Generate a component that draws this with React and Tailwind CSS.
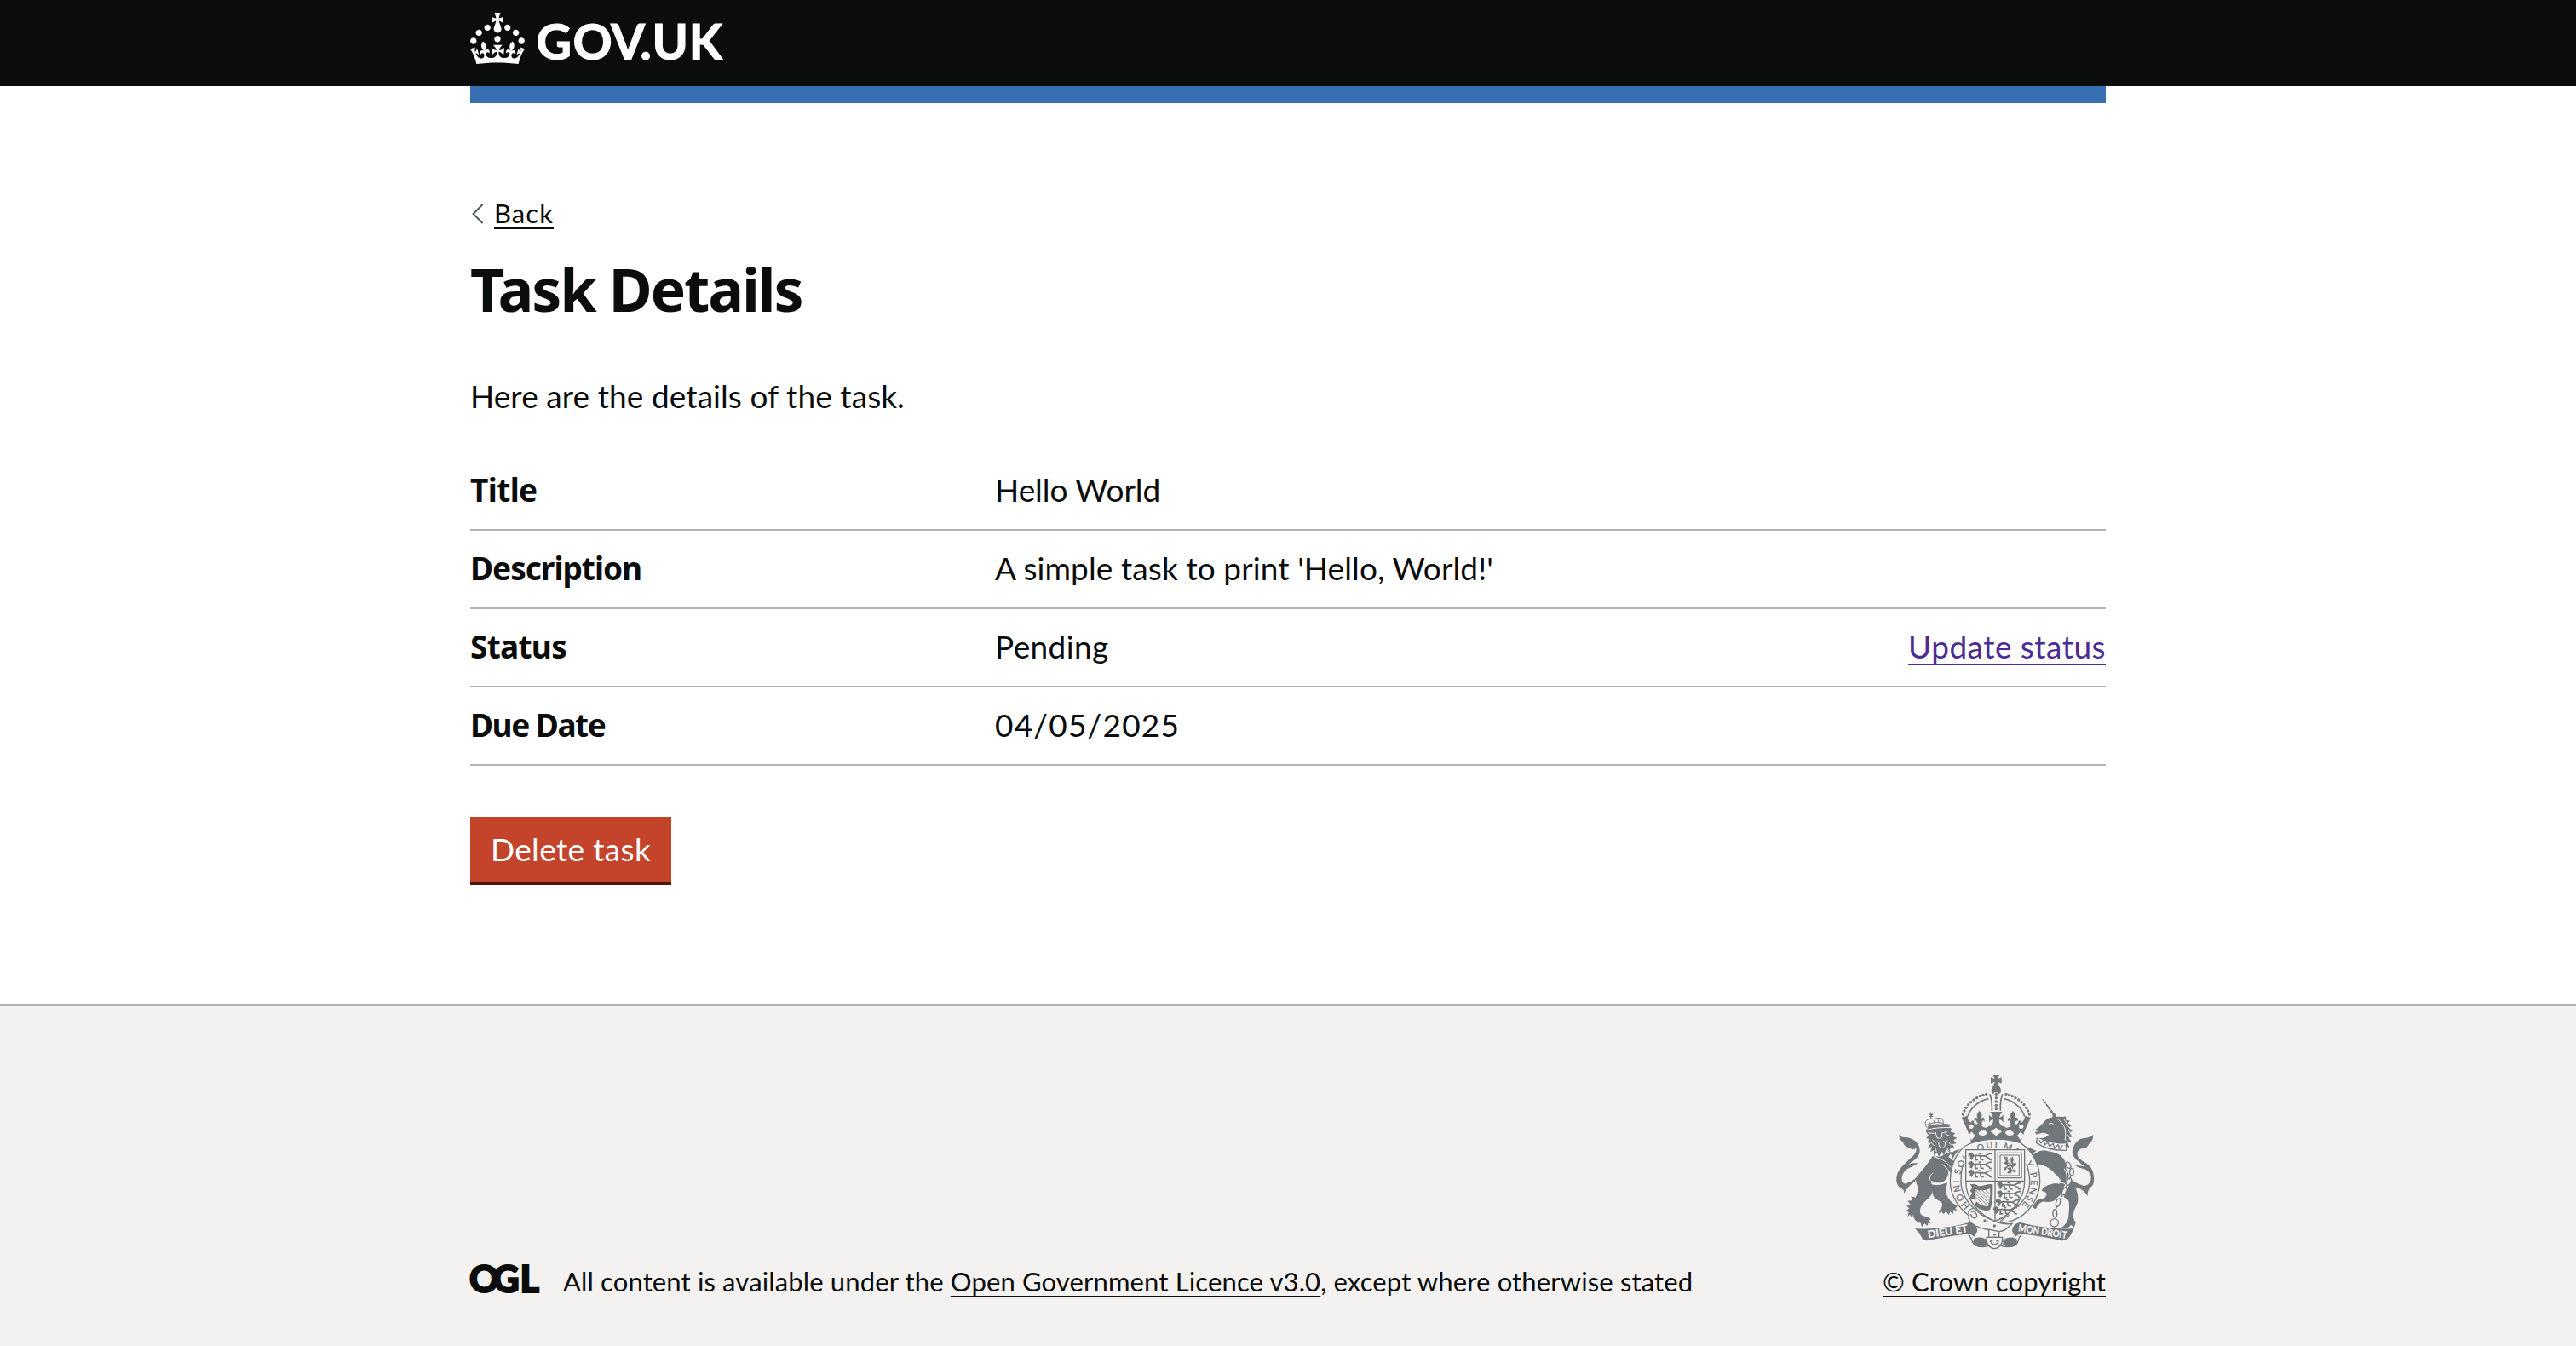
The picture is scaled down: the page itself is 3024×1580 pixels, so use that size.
const rows = [
  { key: "Title", keyClass: "tracking-[-0.6px]", value: "Hello World", valueClass: "tracking-[-0.05px]" },
  { key: "Description", keyClass: "tracking-[-1px]", value: "A simple task to print 'Hello, World!'", valueClass: "tracking-[0.1px]" },
  { key: "Status", keyClass: "tracking-[-0.7px]", value: "Pending", valueClass: "tracking-[0.4px]", action: "Update status" },
  { key: "Due Date", keyClass: "tracking-[-1.5px]", value: "04/05/2025", valueClass: "tracking-[1.2px]" },
];

function GovLogo() {
  return (
    <svg viewBox="0 0 148 30" className="block h-[60px] w-[296px] overflow-visible fill-white" role="img" aria-label="GOV.UK">
      <path d="M22.6 10.4c-1 .4-2-.1-2.4-1-.4-.9.1-2 1-2.4.9-.4 2 .1 2.4 1s-.1 2-1 2.4m-5.9 6.7c-.9.4-2-.1-2.4-1-.4-.9.1-2 1-2.4.9-.4 2 .1 2.4 1s-.1 2-1 2.4m10.8-3.7c-1 .4-2-.1-2.4-1-.4-.9.1-2 1-2.4.9-.4 2 .1 2.4 1s0 2-1 2.4m3.3 4.8c-1 .4-2-.1-2.4-1-.4-.9.1-2 1-2.4.9-.4 2 .1 2.4 1s-.1 2-1 2.4M17 4.7l2.3 1.2V2.5l-2.3.7-.2-.2.9-3h-3.4l.9 3-.2.2c-.1.1-2.3-.7-2.3-.7v3.4L15 4.7c.1.1.1.2.2.2l-1.3 4c-.1.2-.1.4-.1.6 0 1.1.8 2 1.9 2.2h.7c1-.2 1.9-1.1 1.9-2.1 0-.2 0-.4-.1-.6l-1.3-4c-.1-.2 0-.2.1-.3m-7.6 5.7c.9.4 2-.1 2.4-1 .4-.9-.1-2-1-2.4-.9-.4-2 .1-2.4 1s0 2 1 2.4m-5 3c.9.4 2-.1 2.4-1 .4-.9-.1-2-1-2.4-.9-.4-2 .1-2.4 1s.1 2 1 2.4m-3.2 4.8c.9.4 2-.1 2.4-1 .4-.9-.1-2-1-2.4-.9-.4-2 .1-2.4 1s0 2 1 2.4m14.8 11c4.4 0 8.6.3 12.3.8 1.1-4.5 2.4-7 3.7-8.8l-2.5-.9c.2 1.3.3 1.9 0 2.7-.4-.4-.8-1.1-1.1-2.3l-1.2 4c.7-.5 1.3-.8 2-.9-1.1 2.5-2.6 3.1-3.5 3-1.1-.2-1.7-1.2-1.5-2.1.3-1.2 1.5-1.5 2.1-.1 1.1-2.3-.8-3-2-2.3 1.9-1.9 2.1-3.5.6-5.6-2.1 1.6-2.1 3.2-1.2 5.5-1.2-1.4-3.2-.6-2.5 1.6.9-1.4 2.1-.5 1.9.8-.2 1.1-1.7 2.1-3.5 1.9-2.7-.2-2.9-2.1-2.9-3.6.7-.1 1.9.5 2.9 1.9l.4-4.3c-1.1 1.1-2.1 1.4-3.2 1.4.4-1.2 2.1-3 2.1-3h-5.4s1.7 1.9 2.1 3c-1.1 0-2.1-.2-3.2-1.4l.4 4.3c1-1.4 2.2-2 2.9-1.9-.1 1.5-.2 3.4-2.9 3.6-1.9.2-3.4-.8-3.5-1.9-.2-1.3 1-2.2 1.9-.8.7-2.3-1.2-3-2.5-1.6.9-2.2.9-3.9-1.2-5.5-1.5 2-1.3 3.7.6 5.6-1.2-.7-3.1 0-2 2.3.6-1.4 1.8-1.1 2.1.1.2.9-.3 1.9-1.5 2.1-.9.2-2.4-.5-3.5-3 .6 0 1.2.3 2 .9l-1.2-4c-.3 1.1-.7 1.9-1.1 2.3-.3-.8-.2-1.4 0-2.7l-2.9.9C1.3 23 2.6 25.5 3.7 30c3.7-.5 7.9-.8 12.3-.8" />
      <text x="38.7 60.3 82.6 99.6 106.8 128.4" y="27.6" className="font-['Lato'] text-[28.6px] font-bold stroke-white [stroke-width:0.6px]">GOV.UK</text>
    </svg>
  );
}

function OglLogo() {
  return (
    <svg viewBox="0 0 82 34" className="block h-[34px] w-[82px] shrink-0 overflow-visible fill-[#0b0c0c] stroke-[#0b0c0c]" role="img" aria-label="OGL">
      <text x="-1 26.6 58.5" y="32.6" className="font-['Lato'] text-[43px] font-black [stroke-width:2px]">OGL</text>
    </svg>
  );
}

const beads = [[395, 130], [384, 133], [373, 137], [362, 143], [351, 150], [341, 158], [332, 167], [324, 178], [318, 189], [313, 201]];
const walkers = [[374, 352], [374, 382], [374, 412], [476, 455], [476, 485], [470, 515], [462, 542]];

function Fleur({ x, y }) {
  return <path transform={`translate(${x} ${y})`} d="M0-22C10-12 11-4 5 8C10-3 22 2 17 15C14 9 9 11 9 20H-9C-9 11-14 9-17 15C-22 2-10-3-5 8C-11-4-10-12 0-22Z" />;
}

function Crest() {
  return (
    <svg viewBox="75 60 702 618" className="block h-[206px] w-[234px] fill-[#71777a] stroke-[#71777a] [stroke-width:0]" role="img" aria-label="Royal coat of arms">
      {/* crown */}
      <path d="M419 63H441L435 76L449 70V92L435 86L439 99H421L425 86L411 92V70L425 76Z" />
      <path d="M430 97C444 99 449 112 446 124L440 130L436 124H424L420 130L414 124C411 112 416 99 430 97Z" />
      {beads.map(([x, y]) => (
        <g key={x}>
          <circle cx={x} cy={y} r="5" />
          <circle cx={860 - x} cy={y} r="5" />
        </g>
      ))}
      <g className="fill-none [stroke-width:5]">
        <path d="M403 146C368 153 340 178 330 208M457 146C492 153 520 178 530 208" />
        <path d="M408 130C414 148 416 168 415 188M452 130C446 148 444 168 445 188" />
      </g>
      <circle cx="430" cy="130" r="5" />
      <circle cx="430" cy="143" r="5" />
      <circle cx="430" cy="156" r="5" />
      <circle cx="430" cy="169" r="5" />
      <circle cx="430" cy="182" r="5" />
      <path d="M409 192H451C445 200 443 206 441 212C448 211 452 208 455 202V230C451 223 447 220 440 220L443 240H417L420 220C413 220 409 223 405 230V202C408 208 412 211 419 212C417 206 415 200 409 192Z" />
      <Fleur x={371} y={211} />
      <Fleur x={489} y={211} />
      <path d="M308 212L330 206C328 217 334 224 341 230C345 218 352 222 352 230C358 240 366 236 370 224H374C378 236 388 244 398 236C404 244 412 246 418 232H442C448 246 456 244 462 236C472 244 482 236 486 224H490C494 236 502 240 508 230C508 222 515 218 519 230C526 224 532 217 530 206L552 212C541 234 528 262 516 302C462 288 398 288 344 302C332 262 319 234 308 212Z" />
      <g className="fill-[#f3f2f1]">
        <path d="M343 262L356 276L345 291L330 280ZM517 262L504 276L515 291L530 280ZM430 248L450 262L430 277L410 262Z" />
        <ellipse cx="383" cy="267" rx="15" ry="9" transform="rotate(-8 383 267)" />
        <ellipse cx="477" cy="267" rx="15" ry="9" transform="rotate(8 477 267)" />
        <circle cx="342" cy="244" r="8" />
        <circle cx="518" cy="244" r="8" />
        <path d="M378 240C384 248 396 252 404 242L398 232C392 240 384 240 378 240ZM482 240C476 248 464 252 456 242L462 232C468 240 476 240 482 240Z" />
      </g>

      {/* lion */}
      <path d="M88 272C96 285 108 280 124 284C146 290 162 308 161 330C160 356 134 366 118 380C134 370 146 374 156 372C140 384 130 386 116 394C104 402 96 420 98 432C100 446 112 450 120 440C132 440 140 430 150 424L144 438C130 448 118 456 106 480C106 470 104 466 96 462C82 456 76 440 80 418C86 392 108 376 126 358C142 344 152 332 148 318C140 330 130 322 120 318C108 314 102 306 102 298C94 294 88 286 88 272Z" />
      <path d="M206 348C226 352 240 350 254 338L276 332L262 350L280 366C276 374 280 384 296 388C310 386 318 392 324 390L338 398L334 404L342 410L334 414L338 424L324 420L318 430L312 418C300 420 284 414 272 408L262 398C262 416 258 428 244 438C230 446 212 440 200 434L206 462C208 480 198 492 186 502C172 514 160 530 162 546C164 558 178 560 190 564L200 570L194 576L200 586L190 584L188 594L178 586L168 598L164 584L150 578C140 570 136 560 140 548L134 566L126 554L118 562L122 546L114 540L124 532L114 524L128 518L118 506L134 504L130 490L146 494C152 482 156 466 152 452C148 440 146 430 148 424C164 404 190 376 206 348Z" />
      <path d="M200 446C222 456 244 446 258 442C256 458 248 470 256 486C262 498 270 510 284 518L294 524L286 532L292 540L278 538L280 552L268 544L264 556L254 544L244 552L238 544L228 550L232 536C240 528 244 520 236 510C222 502 206 494 206 476Z" />
      <path d="M270 340C282 328 292 326 304 324C290 334 282 346 278 358Z" />
      <path d="M182 262L192 242L206 236L222 240L244 234L268 236L264 246L276 254L268 262L286 268L276 278L292 284L280 292L290 304L276 306L284 322L268 318L266 336L254 324L246 346L238 332L228 350L222 336L210 346L210 328L198 334L204 316L190 318L200 302L186 300L196 288L184 286L192 274Z" />
      <g className="fill-none stroke-[#f3f2f1] [stroke-width:3]">
        <path d="M190 266L212 268M238 268L258 262M216 264L222 284L230 286L240 280L236 262M206 290C212 300 218 304 222 296M244 294C248 304 254 300 258 292M228 298C226 312 234 324 244 318C254 312 250 300 248 296M196 296L212 312M262 298L272 310M256 318L262 330M214 318L220 334M250 270L268 278M186 256C206 250 240 246 266 248" />
        <path d="M210 350C226 356 244 358 262 378C270 388 276 396 292 400M198 434C194 424 198 412 208 408M306 398L326 402M304 408L324 412M262 398L240 376" />
      </g>
      <g className="fill-none [stroke-width:3]">
        <path d="M186 248C176 232 180 220 196 218C204 216 218 218 226 214C242 216 248 226 242 240M188 246C204 238 224 234 242 240M186 238C204 230 222 228 242 232M194 228L198 236M210 222L214 234M226 220L228 232M200 194V216M192 202H208" />
      </g>
      <path d="M194 198L200 202L206 196L204 206L210 210H192L198 206Z" />

      {/* unicorn */}
      <path d="M590 145L597 150L638 202L630 206Z" />
      <path className="fill-none stroke-[#f3f2f1] [stroke-width:3]" d="M592 158L604 150M599 169L611 161M607 180L619 172M615 191L627 183M623 201L634 193" />
      <path d="M600 226C608 216 618 212 626 212L636 196L642 210C656 208 668 212 676 208L674 220L690 224L682 232L696 240L686 248L698 260L688 266L698 280L686 284L696 300L682 300L688 318L674 312L676 304C644 306 604 298 578 284C592 288 608 282 616 272C604 268 596 264 586 268L572 272L566 264L578 262L566 256C576 250 590 240 600 226Z" />
      <g className="fill-none stroke-[#f3f2f1] [stroke-width:3]">
        <path d="M616 234C622 230 630 232 632 238C626 240 620 238 616 234M646 218C668 232 680 256 672 292M668 218L682 236M674 234L690 250M680 254L694 268M680 272L692 288M676 290L688 304" />
      </g>
      <path className="fill-none [stroke-width:4]" d="M574 284L572 302C600 320 636 330 678 328L676 306M582 292L588 302L596 294L602 308L612 300L618 314L630 304L636 320L648 308L654 322L664 310" />
      <path d="M540 362C546 346 570 338 584 330L600 328C616 332 640 334 656 346C672 360 678 376 676 392C684 406 694 428 704 446C714 470 720 484 718 506C714 526 700 540 700 560L710 584L704 600L694 590L680 604L660 600C674 590 680 580 684 566C686 544 690 520 684 504C676 498 668 494 662 484C652 492 646 490 640 502C630 510 610 512 596 508C584 512 576 520 570 534L558 530C562 516 572 508 576 502L594 500C606 492 612 482 604 476L590 470C598 452 624 446 640 444C652 448 658 440 656 430C646 420 630 400 614 390C598 378 578 376 560 374L548 386C546 402 540 412 548 424C556 428 560 436 558 444L540 438C530 424 528 408 532 392C530 378 534 370 540 362Z" />
      <path d="M536 316C548 318 560 326 572 330C560 338 548 342 534 346Z" />
      <path d="M772 272C772 290 764 302 756 306C754 316 742 322 730 322C720 326 712 336 718 350C726 364 748 370 762 386C776 404 778 440 768 454C756 462 752 472 752 490C744 474 732 466 722 462C706 460 696 446 690 428C704 440 722 446 736 452C748 456 762 444 764 428C766 412 756 402 746 396C732 390 722 392 708 382C722 382 732 382 742 388C732 372 704 362 698 338C698 318 708 298 726 288C744 282 758 286 772 272Z" />
      <path className="fill-none stroke-[#f3f2f1] [stroke-width:3]" d="M668 480C664 468 676 456 678 436C680 420 678 404 670 392M648 446C656 440 664 442 672 446" />
      {/* chain */}
      <g className="fill-none stroke-[#f3f2f1] [stroke-width:14]">
        <path d="M684 376L696 400L690 430L674 462L658 494L646 520L636 566" />
      </g>
      <g className="fill-none [stroke-width:4]">
        <ellipse cx="684" cy="380" rx="7" ry="12" transform="rotate(-30 684 380)" />
        <ellipse cx="696" cy="404" rx="7" ry="12" />
        <ellipse cx="686" cy="438" rx="7" ry="13" transform="rotate(24 686 438)" />
        <ellipse cx="670" cy="472" rx="7" ry="13" transform="rotate(24 670 472)" />
        <ellipse cx="648" cy="512" rx="7" ry="14" transform="rotate(16 648 512)" />
        <ellipse cx="637" cy="550" rx="7" ry="14" />
        <circle cx="635" cy="583" r="14" />
        <path d="M693 418L689 428M679 450L674 461M664 484L656 500M644 526L639 538" />
      </g>

      {/* garter */}
      <path className="fill-[#f3f2f1] [stroke-width:4]" d="M344 302C300 316 268 368 268 438C268 486 300 540 350 568C390 592 462 592 508 566C554 540 584 486 584 438C584 380 560 332 516 302C462 284 398 284 344 302Z" />
      <path className="fill-none [stroke-width:4]" d="M314 376C308 392 306 416 306 438C306 474 326 510 352 532M536 376C544 396 548 418 548 438C548 474 530 506 500 528C484 540 462 548 446 552" />
      <defs>
        <path id="garter" d="M338 524A124 119 0 0 1 428 320A124 119 0 0 1 506 532" />
      </defs>
      <text className="font-['Lato'] text-[32px] [stroke-width:0.8px]">
        <textPath href="#garter" textLength="570">HONI SOIT QUI MAL Y PENSE</textPath>
      </text>

      {/* shield */}
      <path className="fill-[#f3f2f1] [stroke-width:4]" d="M323 326H530V436C530 496 490 552 426 578C362 552 323 496 323 436Z" />
      <path className="fill-none [stroke-width:4]" d="M426 326V578M323 436H530M436 337H519V425H436Z" />
      <path className="fill-none [stroke-width:3]" d="M444 345H511V417H444Z" />
      {walkers.map(([x, y]) => (
        <g key={`${x}-${y}`} transform={`translate(${x} ${y})`}>
          <path d="M-42-12L-30-17L-22-8L-24 0L-30 10L-38 6L-34-2L-42-4Z" />
          <path className="fill-none [stroke-width:5]" d="M-26-4C-12-10 6-2 18-5C28-8 26-14 42-12M-16-2L-18 10L-8 9M0-3L2 8L12 10M18-4C24 4 34 0 34 9L42 10M-6-13L4-12" />
        </g>
      ))}
      <path d="M456 352L468 350L474 362L470 370L482 372L480 356L488 350L492 360L488 374L498 370L502 380L490 386L488 394L500 398L498 408L486 402L480 410L468 408L476 398L470 392L458 400L456 390L468 384L462 376L454 374L464 366Z" />
      <path className="fill-none stroke-[#f3f2f1] [stroke-width:3]" d="M464 356L478 366L486 380M466 392L480 384L492 404M476 374L462 386" />
      <path d="M338 448L354 446L366 452C382 458 398 444 418 448L418 462C418 490 418 514 408 538C388 544 364 534 352 520L362 508L354 500L340 500L338 488L346 480L338 470L346 460Z" />
      <path className="fill-[#f3f2f1]" d="M358 466C372 472 394 470 408 462C410 484 408 504 402 524C384 526 368 518 358 504Z" />
      <path className="fill-none [stroke-width:2.5]" d="M358 468L404 516M358 480L396 520M360 493L382 518M368 468L406 506M380 468L408 496M392 466L408 482" />

      {/* belt buckle */}
      <path className="fill-[#f3f2f1] [stroke-width:4]" d="M334 552C326 536 352 526 362 540C372 556 396 566 420 576C436 584 456 590 486 586C472 600 462 612 440 614C402 612 372 600 352 592C340 586 330 574 334 552Z" />
      <path className="fill-none [stroke-width:4]" d="M342 546C346 538 360 546 362 556C364 564 354 570 346 564L340 552M440 584C450 572 462 562 476 556" />
      <circle cx="390" cy="576" r="5" />
      <circle cx="424" cy="594" r="5" />
      <path className="fill-[#f3f2f1] [stroke-width:4]" d="M404 606V634H440V614Z" />
      <path className="fill-none [stroke-width:4]" d="M332 626C348 634 340 656 360 664C378 670 392 668 408 664M520 626C504 634 512 656 494 664C476 670 460 668 446 664" />
      <path d="M352 640C364 630 390 634 398 644V662C380 670 352 668 348 654ZM502 640C490 630 464 634 454 644V662C472 670 500 668 504 654Z" />
      <path className="fill-[#f3f2f1] [stroke-width:4]" d="M396 634H452C454 656 442 672 424 674C406 672 394 656 396 634Z" />
      <path className="fill-none [stroke-width:4]" d="M410 644C408 664 440 664 438 644M410 644L418 648M438 644L430 648" />
      <circle cx="424" cy="625" r="4" />

      {/* motto ribbons */}
      <path d="M144 604C210 606 270 600 334 582C350 582 362 594 364 612L352 632L338 622C296 626 246 634 184 646C168 642 166 630 160 620Z" />
      <path d="M704 604C640 606 576 598 516 582C498 584 488 594 486 612L498 632L512 622C556 626 604 634 660 646C684 644 690 632 696 618Z" />
      <text x="191" y="637" transform="rotate(-9 191 637)" textLength="142" lengthAdjust="spacingAndGlyphs" className="fill-[#f3f2f1] stroke-[#f3f2f1] font-['Lato'] text-[36px] font-bold [stroke-width:1px]">DIEU ET</text>
      <text x="507" y="613" transform="rotate(8.5 507 613)" textLength="172" lengthAdjust="spacingAndGlyphs" className="fill-[#f3f2f1] stroke-[#f3f2f1] font-['Lato'] text-[34px] font-bold [stroke-width:1px]">MON DROIT</text>
    </svg>
  );
}

const link = "underline decoration-2 [text-decoration-skip-ink:none]";

export default function App() {
  return (
    <div className="flex h-[1580px] w-full flex-col bg-white font-['Lato','Liberation_Sans',sans-serif] text-[37px] leading-[50px] text-[#0b0c0c]">
      <header className="h-[101px] bg-[#0b0c0c]">
        <div className="mx-auto w-[1920px] pt-[15px]">
          <GovLogo />
        </div>
      </header>
      <main className="mx-auto w-[1920px] flex-1">
        <div className="h-5 bg-[#386fb3]" />
        <a className="mt-[109px] flex h-10 items-center text-[31px] leading-10">
          <svg viewBox="0 0 28 40" className="h-10 w-7 fill-none stroke-[#505a5f] stroke-2">
            <path d="M14.6 10L3.6 21L14.6 32" />
          </svg>
          <span className={`${link} tracking-[1.05px] underline-offset-[5px]`}>Back</span>
        </a>
        <h1 className="mt-[29px] font-['Noto_Sans'] text-[70px] leading-[80px] font-bold tracking-[-2.2px]">Task Details</h1>
        <p className="mt-[61px] tracking-[0.08px]">Here are the details of the task.</p>
        <dl className="mt-[41px]">
          {rows.map((r) => (
            <div key={r.key} className="flex h-[92px] border-b-2 border-[#b1b3b4] pt-[19px]">
              <dt className={`w-[616px] font-['Noto_Sans'] font-bold ${r.keyClass}`}>{r.key}</dt>
              <dd className={`flex-1 ${r.valueClass}`}>{r.value}</dd>
              {r.action && <dd className={`${link} tracking-[0.47px] text-[#4c2c92] underline-offset-[6px]`}>{r.action}</dd>}
            </div>
          ))}
        </dl>
        <button className="mt-[60px] flex h-20 w-[236px] items-center justify-center border-b-4 border-[#4b170e] bg-[#c3432b] leading-[38px] tracking-[0.35px] text-white">
          Delete task
        </button>
      </main>
      <footer className="h-[401px] border-t-2 border-[#b1b4b6] bg-[#f3f2f1] text-[31px] leading-10">
        <div className="mx-auto flex h-[343px] w-[1920px] items-end justify-between">
          <div className="flex items-start">
            <div>
              <OglLogo />
            </div>
            <p className="ml-[27px] tracking-[0.14px]">
              All content is available under the{" "}
              <a className={`${link} underline-offset-[5px]`}>Open Government Licence v3.0</a>, except where otherwise stated
            </p>
          </div>
          <div className="flex flex-col items-end">
            <div className="mr-[13px] mb-[17px]">
              <Crest />
            </div>
            <a className={`${link} tracking-[0.12px] underline-offset-[5px]`}>© Crown copyright</a>
          </div>
        </div>
      </footer>
    </div>
  );
}
